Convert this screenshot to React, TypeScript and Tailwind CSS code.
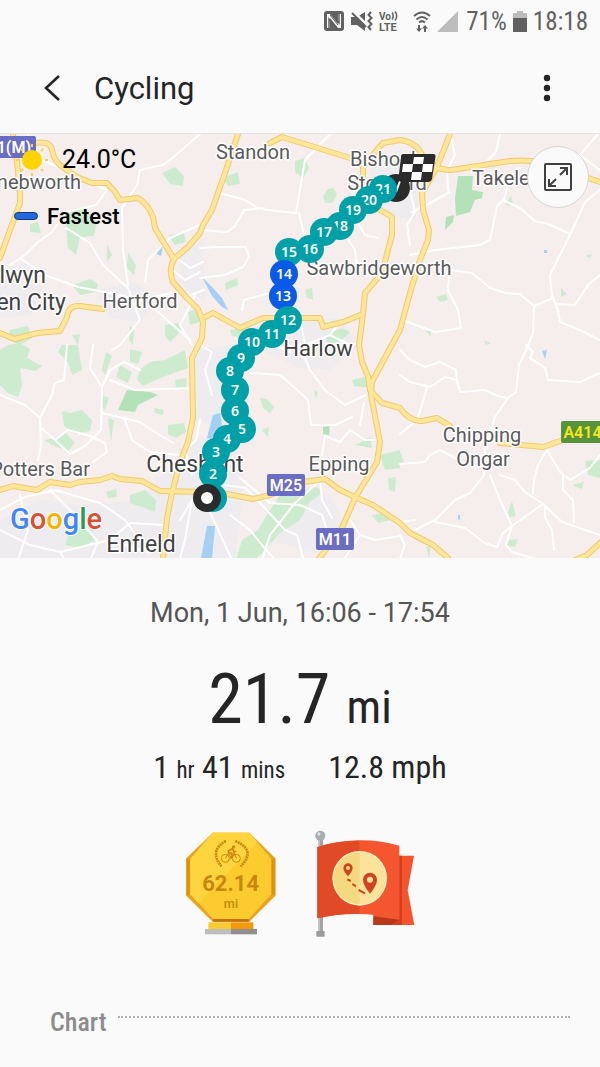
import { ReactNode } from 'react'

type Point = [number, number]

type Place = {
  name: string
  x: number
  y: number
  size: number
  anchor?: 'start' | 'middle' | 'end'
  color?: string
}

const condensed = "font-['Roboto_Condensed',Roboto,sans-serif]"

const mainRoads = [
  'M13 134 L17 162 L20 193 L20 203 L10 230 L0 258',
  'M30 144 Q50 139 52 150 Q54 162 64 168 L77 177 L92 183 L107 183 L115 192 L120 200 L138 198 Q148 204 153 217 L155 228 L164 243 L174 259 Q168 270 173 282 L186 297 L198 309 L203 322 L202 338 L192 358 L193 418 L188 442 L180 462 L172 493 L167 518 L163 558',
  'M174 259 L188 247 L200 233 L203 225 L212 210 L225 173 L238 134',
  'M0 333 L15 339 L37 333 L60 331 L67 317 Q68 305 80 306 L103 309',
  'M203 318 L213 313 L240 328 L263 318 L320 318 L323 327 L343 322 L363 314 L365 293 L382 273 L392 235 L392 217 L380 210 L363 190 L363 167 L371 157 L383 143 L400 140 Q417 142 423 157 L437 168 L448 170',
  'M451 170 L510 161 Q545 158 570 172 L600 182',
  'M363 314 L359 345 L362 362 L368 376 L370 390 L382 403 L400 408 Q410 422 422 421 L437 418 L450 426 M500 443 L543 447 L563 440',
  'M270 143 L282 137 L350 158',
  'M0 490 L13 486 L37 490 L50 482 L70 485 L80 482 L100 480 L112 476 L120 479 L142 481 L160 491 L207 492 L227 494 L253 499 L270 495 L303 482 L325 479 L340 490 L357 498 L373 505 L400 523 L410 533 L433 545 L448 558',
  'M450 134 L437 167 L422 193 L423 210 L429 230 L428 240 L420 260 L410 293 L400 330 L388 352 L372 382 L371 395 L380 442 L377 462 L355 498 L342 528 L318 560',
  'M575 560 L587 555 L600 543',
]

const minorRoads = [
  'M200 134 L170 160 L163 165 L140 170 L137 185 L122 208 L123 250 L128 285',
  'M92 183 L107 190 L96 205 L66 212 L52 232 L38 242 L25 255 L10 265',
  'M25 130 L42 160 L78 176',
  'M66 228 L90 243 L103 265 L128 288 L140 320 L120 345 L112 350',
  'M145 282 L148 260 L170 238 L200 225',
  'M20 258 L45 275 L78 287 L110 293 L140 300 L175 292',
  'M195 296 L180 325 L192 345 M150 305 L190 340',
  'M0 395 L25 405 L40 418 L41 445 L38 460',
  'M40 418 L52 395 L55 383 L64 380 L67 345',
  'M41 428 L55 440 L68 430 L90 436 L105 443 L107 452 L93 462 M55 440 L70 454 L85 446 L101 430 L102 387 L110 370 L124 362 L140 370 M102 387 L90 368 L93 345',
  'M102 413 L140 422 L155 432 L173 443 M110 380 L135 390 L195 388',
  'M125 420 L132 440 L150 452 L180 455',
  'M0 510 L25 497 L55 490 L100 503 L125 520 L140 540',
  'M0 530 L30 545 L60 552 L110 540 L150 553 M110 540 L130 523 L165 525 M60 552 L65 560',
  'M18 560 L28 530 L20 495 M90 560 L98 542 L80 520 L50 490',
  'M220 193 L245 200 L256 207 L267 210 L296 213 L305 160 L330 134',
  'M200 230 L227 232 L235 226 L244 210 L264 208 M200 248 L215 247 L246 247 L249 257 L243 267 L225 275 L200 278',
  'M242 310 L244 300 L280 290 M299 213 L305 240',
  'M345 235 L355 250 L358 275 M352 212 L365 235 L378 238 M410 255 L435 250 L480 245 L490 240 L497 206 L503 200 L520 208 L535 221 L548 224 L568 233',
  'M600 190 L585 202 L570 235 L550 275 L552 296 L558 310 L560 322 L580 330 L600 340',
  'M504 200 L508 184 L520 168 M500 134 L496 152 L488 160 M450 192 L430 203 L412 212',
  'M450 270 L472 273 L490 288 L505 293 L520 294 L534 306 L553 298 M534 306 L533 333 L526 350 L519 365 L516 392 L508 398 L498 396 L485 390 L460 392 L457 380 L445 377 L430 387 L410 382 L400 375',
  'M450 270 L448 290 L458 310 L461 328 L435 332 L405 321',
  'M555 304 L575 305 L588 285 L600 275 M600 170 L580 155 L598 134',
  'M410 245 L407 225 L415 212 L410 190 M450 134 L455 155 L447 170 L448 190',
  'M526 345 L533 352 L530 358 L545 368 L548 380 L580 382 L600 373',
  'M400 350 L410 360 L425 367 L440 362 L456 370 L457 382 M427 387 L422 405 L417 420 L400 434',
  'M400 464 L425 462 L430 455 L440 450 L455 458',
  'M508 398 L495 417 L485 450 L484 475 L470 493 L455 500 L435 520 L415 530',
  'M435 522 L465 528 L485 543 L497 547 L503 533 L512 526 L543 504 L562 522 L600 535',
  'M490 475 L500 500 L512 526 L506 545 L512 552 L540 560',
  'M500 475 L515 480 L525 492 L545 505 L545 518 L552 530 L554 550',
  'M533 493 L534 480 L538 465 L547 450 L560 472 L570 480 L590 468 L600 455 M563 475 L563 490 L573 500 L574 522',
  'M250 373 L280 375 L295 388 L308 400 L311 425 L335 425 L352 417 M300 345 L310 370 L325 390 L345 405 L366 395',
  'M325 436 L340 442 L350 430 L365 440 L376 440 M325 436 L322 455 M360 425 L364 403',
  'M225 485 L245 488 L262 505 L285 530 L297 535 L303 558 M230 515 L250 530 L262 545 L275 560',
  'M262 560 L270 535 L295 503 L318 482 M240 478 L270 503 L300 505 L322 515 L330 540',
  'M320 480 L322 500 L332 518 M360 535 L375 540 L400 536 M345 558 L360 535 L350 520',
  'M263 320 L275 345 L290 352 M300 318 L305 345 L330 335 L340 322 M330 335 L350 345 L358 343',
  'M200 345 L212 352 L205 370 L212 395 M200 420 L196 440 L185 450 L192 475',
  'M180 520 L192 500 L185 540 L180 558 M209 510 L232 560',
  'M170 268 L185 280 L200 272 M175 257 L190 268 L203 262 M186 297 L204 290',
  'M415 520 L400 522 M400 535 L405 545 L400 558',
]

const parks = [
  'M162 173 L175 167 L184 176 L183 186 L170 184 Z',
  'M65 212 L85 208 L97 222 L94 236 L80 237 L76 255 L68 248 Z',
  'M30 224 L38 222 L41 233 L30 232 Z',
  'M107 244 L112 255 L107 262 Z M128 253 L136 265 L134 275 L127 268 Z',
  'M72 285 L90 279 L98 284 L96 292 L80 295 Z M168 235 L184 233 L186 242 L175 245 Z',
  'M165 325 L178 323 L182 330 L170 342 L165 336 Z M188 312 L200 308 L200 322 L190 325 Z',
  'M10 330 L28 326 L32 338 L20 345 L8 340 Z M72 335 L80 334 L78 345 Z',
  'M130 325 L134 330 L133 345 L129 340 Z',
  'M0 350 L8 345 L20 343 L30 349 L27 358 L42 366 L36 371 L20 368 L22 386 L18 397 L8 393 L0 385 Z',
  'M62 345 L78 345 L82 370 L72 375 L68 362 L58 352 Z M130 349 L142 352 L138 364 L130 362 Z',
  'M120 365 L132 372 L128 383 L116 377 Z M106 352 L112 356 L105 375 L102 370 Z',
  'M140 370 L150 362 L165 360 L185 350 L188 368 L160 378 L143 386 L137 380 Z',
  'M62 411 L70 413 L82 410 L92 420 L90 431 L75 434 L64 426 Z',
  'M45 440 L55 438 L65 432 L75 443 L68 451 L52 445 Z',
  'M168 425 L184 423 L186 432 L176 438 L168 434 Z M154 408 L164 410 L163 415 L155 413 Z',
  'M102 395 L109 398 L105 410 L101 406 Z M108 418 L114 420 L111 442 Z',
  'M175 380 L187 378 L185 390 L176 388 Z',
  'M130 495 L145 490 L156 500 L155 512 L145 508 L130 503 Z',
  'M65 545 L72 525 L92 530 L95 540 L80 548 Z M106 492 L116 489 L117 497 L108 498 Z',
  'M295 161 L305 158 L309 168 L303 178 L295 172 Z',
  'M323 196 L328 189 L334 188 L337 195 L332 203 L325 203 Z',
  'M222 178 L238 172 L240 184 L228 186 Z M225 283 L237 278 L238 285 L226 290 Z',
  'M305 290 L312 288 L313 300 L307 298 Z M230 330 L245 328 L243 338 L232 336 Z',
  'M325 335 L342 328 L350 332 L340 342 L328 343 Z',
  'M260 398 L267 399 L274 407 L270 413 L263 408 Z M262 430 L269 427 L268 437 Z',
  'M352 380 L372 375 L370 388 L354 386 Z M314 390 L318 392 L316 399 Z',
  'M236 560 L242 540 L258 530 L270 510 L280 495 L318 487 L322 493 L310 502 L300 520 L280 533 L265 550 L255 560 Z',
  'M380 455 L400 450 L400 468 L385 470 Z M388 478 L396 477 L395 492 L389 490 Z',
  'M372 515 L388 513 L392 520 L378 523 Z M355 445 L370 437 L372 448 Z',
  'M505 204 L511 196 L513 203 L508 206 Z M436 297 L446 294 L448 300 L440 302 Z',
  'M585 461 L600 460 L600 478 L588 475 Z M572 485 L584 482 L582 489 Z',
  'M508 512 L512 501 L516 516 L510 517 Z M507 540 L518 539 L515 547 L507 546 Z',
  'M425 330 L432 331 L430 336 Z M484 340 L491 343 L486 345 Z M561 288 L567 294 L561 297 Z',
  'M585 256 L592 254 L590 258 Z M426 547 L431 546 L429 558 Z M400 452 L404 462 L400 463 Z',
]

const deepParks = [
  'M458 176 L473 176 L472 190 L483 192 L482 198 L475 200 L470 212 L456 216 L455 198 Z',
  'M446 217 L454 215 L453 222 L445 230 Z',
  'M127 390 L150 392 L158 395 L138 405 L135 412 L118 410 Z',
  'M323 427 L330 426 L329 435 L323 434 Z',
]

const urbanAreas = [
  'M0 270 L30 262 L42 290 L30 315 L0 318 Z',
  'M95 290 L135 282 L160 300 L140 322 L110 318 Z',
  'M0 520 L40 500 L80 505 L140 500 L165 470 L190 440 L230 430 L245 478 L235 560 L0 560 Z',
  'M245 325 L340 318 L358 345 L330 370 L300 368 L262 350 Z',
  'M195 350 L230 345 L228 430 L195 420 Z',
  'M400 150 L425 180 L415 220 L385 215 L365 195 L370 165 Z',
  'M275 500 L330 495 L345 525 L320 555 L270 540 Z',
  'M176 250 L204 240 L205 300 L185 290 Z',
]

const waters = [
  'M202 277 L212 287 L222 298 L228 310 L222 307 L212 296 Z',
  'M213 415 L220 413 L222 425 L214 432 L215 440 L207 438 Z',
  'M207 526 L215 526 L212 558 L201 558 Z',
  'M158 248 L163 246 L161 256 L157 254 Z',
  'M542 351 L547 350 L545 359 Z',
  'M544 250 L547 250 L547 253 L544 253 Z',
  'M458 515 L460 515 L460 520 L458 519 Z',
]

const places: Place[] = [
  { name: 'Standon', x: 253, y: 159, size: 20 },
  { name: 'Bishop’s', x: 350, y: 166, size: 20, anchor: 'start' },
  { name: 'Stortford', x: 387, y: 190, size: 20 },
  { name: 'Takeley', x: 472, y: 185, size: 20, anchor: 'start' },
  { name: 'Knebworth', x: 81, y: 189, size: 20, anchor: 'end' },
  { name: 'Welwyn', x: 46, y: 283, size: 23, anchor: 'end', color: '#3f4043' },
  { name: 'Garden City', x: 66, y: 310, size: 23, anchor: 'end', color: '#3f4043' },
  { name: 'Hertford', x: 140, y: 308, size: 20 },
  { name: 'Sawbridgeworth', x: 379, y: 275, size: 20 },
  { name: 'Harlow', x: 318, y: 356, size: 22, color: '#3f4043' },
  { name: 'Chipping', x: 482, y: 442, size: 20 },
  { name: 'Ongar', x: 483, y: 466, size: 20 },
  { name: 'Epping', x: 339, y: 471, size: 20 },
  { name: 'Potters Bar', x: 90, y: 476, size: 20, anchor: 'end' },
  { name: 'Cheshunt', x: 195, y: 472, size: 23, color: '#3f4043' },
  { name: 'Enfield', x: 141, y: 552, size: 23, color: '#3f4043' },
]

// one entry per mile, in order
const miles: Point[] = [
  [213, 498],
  [213, 474],
  [216, 452],
  [227, 439],
  [242, 429],
  [235, 411],
  [235, 390],
  [230, 371],
  [241, 358],
  [252, 342],
  [272, 334],
  [288, 320],
  [283, 296],
  [284, 274],
  [289, 252],
  [310, 249],
  [324, 232],
  [340, 226],
  [353, 210],
  [369, 200],
  [383, 189],
]

const fastest = [13, 14]

function StatusBar() {
  return (
    <div
      className={`flex h-[42px] items-center justify-end pr-3 text-[25px] leading-none text-[#616161] ${condensed}`}
    >
      <svg width="20" height="20" viewBox="0 0 20 20" className="mr-[7px]">
        <rect width="20" height="20" rx="3" fill="#616161" />
        <path d="M3 17 V3 H6 L14 13 V3 H17 V17 H14 L6 7 V17 Z" fill="#fafafa" />
        <path d="M5 0 L15 12 V0 M5 20 V8 L15 20" fill="none" stroke="#616161" strokeWidth="1.500" />
        <path d="M6 4 L14 14" stroke="#616161" strokeWidth="1" />
      </svg>
      <svg width="22" height="20" viewBox="0 0 22 20" className="mr-[6px]">
        <path d="M0 6 H6 L14 1 V20 L6 14 H0 Z" fill="#616161" />
        <path d="M1 -1 L16 14" stroke="#fafafa" strokeWidth="2.500" />
        <path d="M1 2 L15 16" stroke="#616161" strokeWidth="2" />
        <path
          d="M20 1 L17.500 4 L20.500 7 L17.500 10 L20.500 13 L17.500 16 L20 19"
          fill="none"
          stroke="#616161"
          strokeWidth="2"
        />
      </svg>
      <svg
        width="22"
        height="21"
        viewBox="0 0 22 21"
        className="mr-3 font-[Roboto,sans-serif]"
        fill="#616161"
        fontWeight="700"
      >
        <text x="0" y="9" fontSize="10">
          Vo
        </text>
        <path
          d="M13 1.500 Q15.500 5 13 8.500 M16 0.500 Q19.500 5 16 9.500"
          fill="none"
          stroke="#616161"
          strokeWidth="1.500"
        />
        <text x="0" y="20" fontSize="11">
          LTE
        </text>
      </svg>
      <svg width="18" height="21" viewBox="0 0 18 21" className="mr-[6px]">
        <g fill="none" stroke="#616161" strokeWidth="2">
          <path d="M1 5 Q9 -2 17 5" />
          <path d="M3.500 8.500 Q9 3.500 14.500 8.500" />
          <path d="M6 11.500 Q9 8.700 12 11.500" />
          <path d="M6 14 V20 M12 21 V15" />
        </g>
        <path d="M3 17.500 H9 L6 21 Z M9 17.500 H15 L12 14 Z" fill="#616161" />
      </svg>
      <svg width="21" height="21" viewBox="0 0 21 21" className="mr-2">
        <path d="M21 0 V21 H0 Z" fill="#bdbdbd" />
      </svg>
      <span>71%</span>
      <svg width="14" height="21" viewBox="0 0 14 21" className="mx-[6px]">
        <path d="M4 0 H10 V2 H14 V8 H0 V2 H4 Z" fill="#bdbdbd" />
        <rect y="7" width="14" height="14" fill="#616161" />
      </svg>
      <span>18:18</span>
    </div>
  )
}

function Header() {
  return (
    <header className="flex h-[92px] items-center border-b border-[#e4e4e4] pr-8 pl-10">
      <button aria-label="Back" className="flex h-10 w-8 items-center">
        <svg width="24" height="28" viewBox="0 0 24 28">
          <path d="M19 2 L6 14 L19 26" fill="none" stroke="#252525" strokeWidth="2.600" />
        </svg>
      </button>
      <h1 className="flex-1 pt-1 pl-[22px] text-[31px] text-[#252525]">Cycling</h1>
      <button aria-label="More options" className="flex h-10 w-[42px] items-center justify-center">
        <svg width="8" height="28" viewBox="0 0 8 28" fill="#252525">
          <circle cx="4" cy="4" r="3.200" />
          <circle cx="4" cy="14" r="3.200" />
          <circle cx="4" cy="24" r="3.200" />
        </svg>
      </button>
    </header>
  )
}

function RoadSign({ x, y, width, children, fill = '#6b6cc4', color = '#fff' }: {
  x: number
  y: number
  width: number
  children: ReactNode
  fill?: string
  color?: string
}) {
  return (
    <g>
      <rect x={x} y={y} width={width} height="22" rx="2" fill={fill} />
      <text
        x={x + width / 2}
        y={y + 17}
        fontSize="16"
        fontWeight="600"
        textAnchor="middle"
        fill={color}
      >
        {children}
      </text>
    </g>
  )
}

function RouteMap() {
  return (
    <svg viewBox="0 134 600 424" className="block w-full" role="img" aria-label="Route map">
      <rect y="134" width="600" height="424" fill="#f5eeec" />
      {urbanAreas.map((d) => (
        <path key={d} d={d} fill="#ecebef" opacity="0.8" />
      ))}
      {parks.map((d) => (
        <path key={d} d={d} fill="#cdeccf" />
      ))}
      {deepParks.map((d) => (
        <path key={d} d={d} fill="#b4e2b8" />
      ))}
      {waters.map((d) => (
        <path key={d} d={d} fill="#a5cff5" />
      ))}
      <g fill="none" strokeLinejoin="round" strokeLinecap="round">
        {minorRoads.map((d) => (
          <path key={d} d={d} stroke="#fff" strokeWidth="2" />
        ))}
        {mainRoads.map((d) => (
          <path key={d} d={d} stroke="#efcb6c" strokeWidth="6" />
        ))}
        {mainRoads.map((d) => (
          <path key={d} d={d} stroke="#fde699" strokeWidth="4" />
        ))}
      </g>

      <g stroke="#fff" strokeWidth="3" strokeLinejoin="round" style={{ paintOrder: 'stroke' }}>
        {places.map((place) => (
          <text
            key={place.name}
            x={place.x}
            y={place.y}
            fontSize={place.size}
            textAnchor={place.anchor ?? 'middle'}
            fill={place.color ?? '#5a5a5c'}
          >
            {place.name}
          </text>
        ))}
      </g>

      <RoadSign x={-19} y={136} width={55}>
        A1(M)
      </RoadSign>
      <RoadSign x={267} y={474} width={38}>
        M25
      </RoadSign>
      <RoadSign x={316} y={528} width={38}>
        M11
      </RoadSign>
      <RoadSign x={561} y={421} width={43} fill="#56933a" color="#f8e71c">
        A414
      </RoadSign>

      <text
        x="10"
        y="529"
        fontSize="29"
        fontWeight="500"
        stroke="#fff"
        strokeWidth="2"
        style={{ paintOrder: 'stroke' }}
      >
        <tspan fill="#4285f4">G</tspan>
        <tspan fill="#db4f35">o</tspan>
        <tspan fill="#f4b400">o</tspan>
        <tspan fill="#4285f4">g</tspan>
        <tspan fill="#2f9a57">l</tspan>
        <tspan fill="#db4f35">e</tspan>
      </text>

      <circle cx="396" cy="188" r="14" fill="#2b2b2b" />
      <path d="M400 181 L396 192" stroke="#fff" strokeWidth="2" />
      {miles
        .map(([x, y], i) => ({ x, y, mile: i + 1 }))
        .reverse()
        .map(({ x, y, mile }) => (
          <g key={mile}>
            <circle cx={x} cy={y} r="14" fill={fastest.includes(mile) ? '#0a5ae8' : '#00a0a8'} />
            <text
              x={x}
              y={y + 5}
              fontSize="14"
              fontWeight="600"
              textAnchor="middle"
              fill="#fff"
              className="font-['Noto_Sans','Open_Sans',sans-serif]"
            >
              {mile}
            </text>
          </g>
        ))}
      <circle cx="207" cy="498" r="10" fill="#fff" stroke="#2b2b2b" strokeWidth="8" />

      <g transform="translate(396 153)">
        <path d="M7 1 H37 Q40 1 39.500 4 L36 26 Q35 29 32 29 H6 Q2 29 2.500 25 L5 4 Q5 1 7 1 Z" fill="#2b2b2b" />
        <path
          d="M18 4 H28 L27 11 H17 Z M7 11 H17 L16 19 H6 Z M27 11 H37 L36 19 H26 Z M16 19 H26 L25 27 H15 Z"
          fill="#fff"
        />
      </g>
    </svg>
  )
}

function WeatherLegend() {
  return (
    <div className="absolute top-[10px] left-4 flex flex-col gap-6 text-black">
      <div className="flex h-8 items-center gap-[14px] text-[25px]">
        <svg width="32" height="32" viewBox="0 0 32 32">
          <circle cx="16" cy="16" r="10" fill="#ffd400" />
          <path
            d="M16 0 V3 M16 29 V32 M0 16 H3 M29 16 H32 M5 5 L7 7 M27 5 L25 7 M5 27 L7 25 M27 27 L25 25"
            stroke="#f6d34c"
            strokeWidth="2"
          />
        </svg>
        24.0°C
      </div>
      <div className="flex h-8 items-center gap-[9px] text-[22px] font-medium">
        <span className="-ml-[2px] h-2 w-6 rounded-full border border-[#173a78] bg-[#1f6ae0]" />
        Fastest
      </div>
    </div>
  )
}

function DistanceBadge() {
  return (
    <svg width="90" height="103" viewBox="48 45 270 309" role="img" aria-label="62.14 mi award">
      <path d="M128 47 H238 L316 124 V236 L238 314 H128 L49 236 V124 Z" fill="#e9a21c" />
      <path d="M49 124 L62 128 V232 L49 236 Z M303 128 L316 124 V236 L303 232 Z" fill="#dc9410" />
      <path d="M128 47 H238 L304 126 V232 L236 306 H130 L61 232 V126 Z" fill="#fccb2f" />
      <path d="M128 47 H238 L262 76 L84 258 L61 232 V126 Z" fill="#ffd53f" />
      <path d="M130 306 H236 L238 314 H128 Z" fill="#c7700c" />
      <rect x="115" y="316" width="68" height="21" fill="#fccb2f" />
      <rect x="183" y="316" width="67" height="21" fill="#f39a0b" />
      <rect x="105" y="336" width="78" height="16" fill="#bdbdbd" />
      <rect x="183" y="336" width="78" height="16" fill="#8f8f8f" />
      <g fill="none" stroke="#c8870f">
        <path d="M168 72 Q116 100 154 148 M196 72 Q260 100 212 148" strokeWidth="8" strokeDasharray="6 2" />
        <g strokeWidth="3">
          <circle cx="166" cy="124" r="12" />
          <circle cx="199" cy="124" r="12" />
          <path d="M166 124 L176 108 L193 108 L199 124 M193 108 L183 125 L176 108" />
        </g>
        <path d="M173 103 L187 95 L192 104 H199 M173 103 L186 112 L182 124" strokeWidth="5" />
      </g>
      <circle cx="191" cy="90" r="5" fill="#c8870f" />
      <g
        fill="#c8870f"
        fontWeight="700"
        textAnchor="middle"
        className="font-[Roboto,sans-serif]"
      >
        <text x="182" y="222" fontSize="66">
          62.14
        </text>
        <text x="183" y="273" fontSize="38" fontWeight="500">
          mi
        </text>
      </g>
    </svg>
  )
}

function RouteBadge() {
  return (
    <svg width="100" height="107" viewBox="45 37 300 321" role="img" aria-label="Route award">
      <path d="M220 114 H342 L323 218 L343 322 H220 Z" fill="#f4532e" />
      <path d="M298 114 H306 V322 H220 L298 304 Z" fill="#d2411f" />
      <path d="M220 296 L298 306 L270 322 H220 Z" fill="#b93817" />
      <rect x="54" y="66" width="15" height="275" fill="#a3a3a3" />
      <rect x="54" y="66" width="6" height="275" fill="#c4c4c4" />
      <rect x="49" y="340" width="25" height="17" rx="2" fill="#9c9c9c" />
      <circle cx="61" cy="54" r="15" fill="#a9adb0" />
      <circle cx="57" cy="49" r="5" fill="#dfe2e4" />
      <path d="M52 88 Q175 50 298 84 V306 Q175 272 52 302 Z" fill="#f4572f" />
      <path d="M52 88 Q115 68 178 69 V289 Q115 287 52 302 Z" fill="#e04a26" />
      <circle cx="179" cy="182" r="82" fill="#fff3c4" />
      <circle cx="179" cy="182" r="78" fill="#fbe49a" />
      <path d="M179 104 A78 78 0 0 0 179 260 Z" fill="#f5d981" />
      <g fill="#cf4420">
        <path
          fillRule="evenodd"
          d="M144 176 Q130 160 130 151 A14 14 0 0 1 158 151 Q158 160 144 176 Z M144 145 A6 6 0 1 0 144 157 A6 6 0 1 0 144 145 Z"
        />
        <path
          fillRule="evenodd"
          d="M210 228 Q189 202 189 186 A21 21 0 0 1 231 186 Q231 202 210 228 Z M210 177 A9 9 0 1 0 210 195 A9 9 0 1 0 210 177 Z"
        />
      </g>
      <path
        d="M142 185 L152 190 M157 199 L168 206 M176 217 L195 227"
        stroke="#cf4420"
        strokeWidth="6"
      />
    </svg>
  )
}

export default function App() {
  return (
    <div className="flex min-h-screen flex-col bg-[#fafafa] font-[Roboto,sans-serif]">
      <StatusBar />
      <Header />
      <main className="flex flex-col">
        <section className="relative overflow-hidden">
          <RouteMap />
          <WeatherLegend />
          <button
            aria-label="Expand map"
            className="absolute top-3 right-[11px] flex size-[62px] items-center justify-center rounded-full border border-[#d6d6d6] bg-[#fafafa]"
          >
            <svg width="28" height="28" viewBox="0 0 28 28" fill="none" stroke="#404040" strokeWidth="2">
              <rect x="1" y="1" width="26" height="26" rx="1" />
              <path d="M16 12 L23 5 M16 5 H23 V12 M12 16 L5 23 M5 16 V23 H12" />
            </svg>
          </button>
        </section>

        <section className={`flex flex-col items-center text-[#252525] ${condensed}`}>
          <p className="mt-[37px] font-[Roboto,sans-serif] text-[27px] leading-9 text-[#555]">
            Mon, 1 Jun, 16:06 - 17:54
          </p>
          <p className="mt-7 text-[70px] leading-[80px]">
            21.7 <span className="text-[46px]">mi</span>
          </p>
          <div className="flex gap-[43px] text-[32px] leading-10">
            <p>
              1 <span className="text-[23px]">hr</span> 41 <span className="text-[23px]">mins</span>
            </p>
            <p>12.8 mph</p>
          </div>
          <div className="mt-[39px] flex items-center gap-[39px]">
            <DistanceBadge />
            <RouteBadge />
          </div>
        </section>

        <section className="mt-[70px] flex pr-[30px] pl-[50px]">
          <h2 className={`text-[26px] leading-[30px] font-medium text-[#8c8c8c] ${condensed}`}>
            Chart
          </h2>
          <div className="mt-[9px] ml-[11px] flex-1 border-t-2 border-dotted border-[#b0b0b0]" />
        </section>
      </main>
    </div>
  )
}
